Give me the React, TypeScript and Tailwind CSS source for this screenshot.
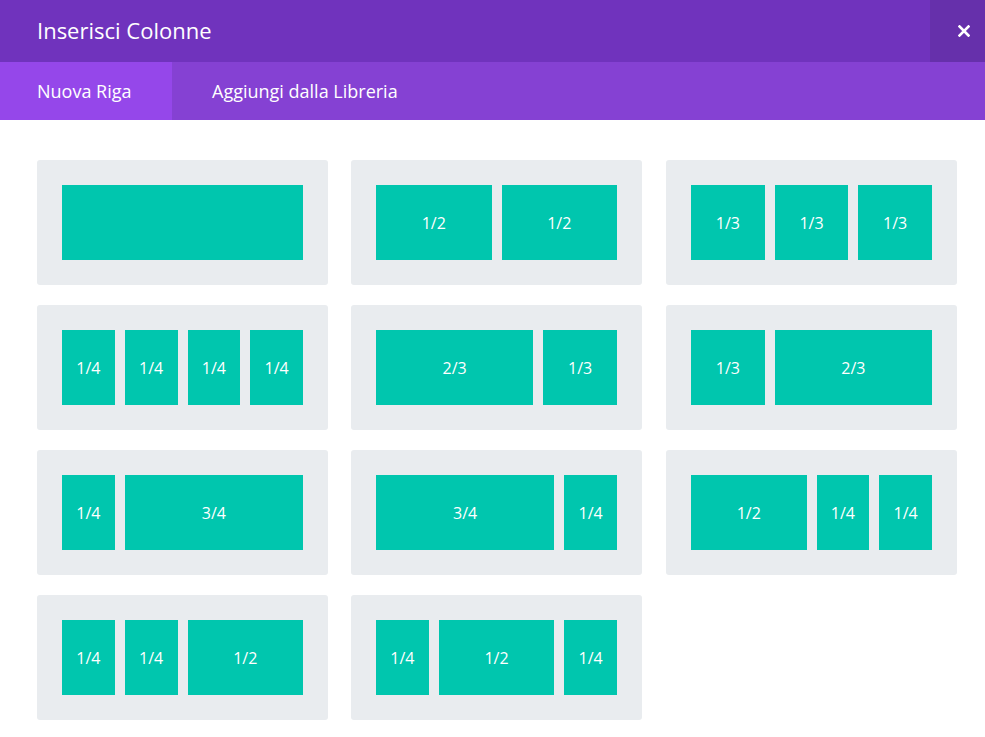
import React from "react";

type Col = { span: number; label?: string };

const rows: Col[][] = [
  [{ span: 12 }],
  [{ span: 6, label: "1/2" }, { span: 6, label: "1/2" }],
  [{ span: 4, label: "1/3" }, { span: 4, label: "1/3" }, { span: 4, label: "1/3" }],
  [{ span: 3, label: "1/4" }, { span: 3, label: "1/4" }, { span: 3, label: "1/4" }, { span: 3, label: "1/4" }],
  [{ span: 8, label: "2/3" }, { span: 4, label: "1/3" }],
  [{ span: 4, label: "1/3" }, { span: 8, label: "2/3" }],
  [{ span: 3, label: "1/4" }, { span: 9, label: "3/4" }],
  [{ span: 9, label: "3/4" }, { span: 3, label: "1/4" }],
  [{ span: 6, label: "1/2" }, { span: 3, label: "1/4" }, { span: 3, label: "1/4" }],
  [{ span: 3, label: "1/4" }, { span: 3, label: "1/4" }, { span: 6, label: "1/2" }],
  [{ span: 3, label: "1/4" }, { span: 6, label: "1/2" }, { span: 3, label: "1/4" }],
];

const spanClass: Record<number, string> = {
  3: "col-span-3",
  4: "col-span-4",
  6: "col-span-6",
  8: "col-span-8",
  9: "col-span-9",
  12: "col-span-12",
};

export default function App() {
  return (
    <div
      className="w-[985px] h-[737px] bg-white overflow-hidden"
      style={{ fontFamily: '"Open Sans", sans-serif' }}
    >
      <div className="flex h-[62px] bg-[#7033bd] text-white">
        <div className="flex-1 flex items-center pl-[37px] text-[22px] leading-none pb-[2px]">
          Inserisci Colonne
        </div>
        <div className="w-[55px] h-full bg-[#6630ab] flex items-center justify-center pl-[13px]">
          <svg width="12" height="12" viewBox="0 0 12 12">
            <path d="M1.5 1.5 L10.5 10.5 M10.5 1.5 L1.5 10.5" stroke="white" strokeWidth="2.6" strokeLinecap="square" />
          </svg>
        </div>
      </div>
      <div className="flex h-[58px] bg-[#8541d3] text-white text-[18px]">
        <div className="w-[172px] h-full bg-[#9547ea] flex items-center pl-[37px]">Nuova Riga</div>
        <div className="h-full flex items-center pl-[40px]">Aggiungi dalla Libreria</div>
      </div>
      <div className="grid grid-cols-[314px_315px_291px] gap-y-[20px] pl-[37px] pt-[40px]">
        {rows.map((row, i) => (
          <div key={i} className="w-[291px] h-[125px] rounded-[3px] bg-[#e9ecef] p-[25px]">
            <div className="grid grid-cols-12 gap-x-[10px] h-[75px]">
              {row.map((c, j) => (
                <div
                  key={j}
                  className={`${spanClass[c.span]} bg-[#00c6ae] flex items-center justify-center text-white text-[16px]`}
                >
                  {c.label}
                </div>
              ))}
            </div>
          </div>
        ))}
      </div>
    </div>
  );
}
